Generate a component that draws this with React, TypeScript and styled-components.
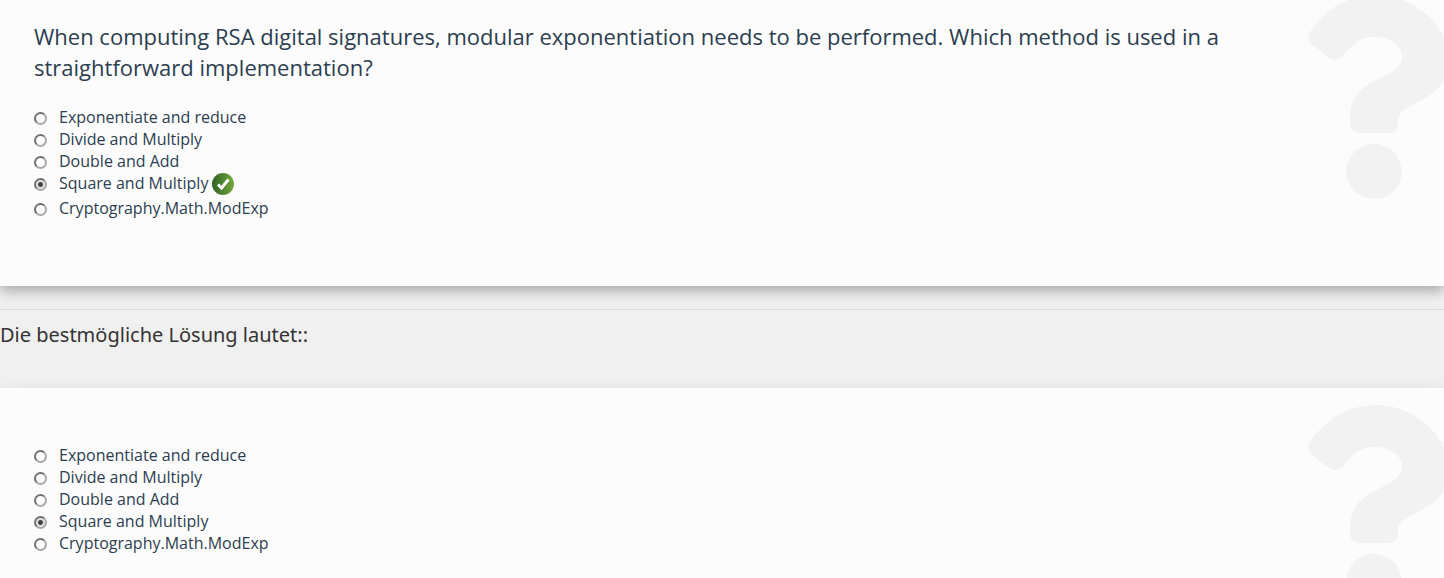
import React from "react";
import styled, { createGlobalStyle } from "styled-components";

const GlobalStyle = createGlobalStyle`
  body {
    margin: 0;
    background: #f0f0f0;
    color: #2c3e50;
    font-family: "Open Sans", "Noto Sans", sans-serif;
    font-size: 16px;
  }
`;

const Page = styled.main`
  min-height: 100vh;
  overflow: hidden;
`;

const Card = styled.section<{ $first?: boolean }>`
  position: relative;
  overflow: hidden;
  background: #fcfcfc;
  padding: ${(p) => (p.$first ? "21px 200px 67px 34px" : "56px 200px 24px 34px")};
`;

const CardShadow = styled.div`
  box-shadow: 0 5px 11px rgba(0, 0, 0, 0.18), 0 4px 15px rgba(0, 0, 0, 0.15);

  & ~ & {
    box-shadow: 0 6px 20px rgba(0, 0, 0, 0.1);
  }
`;

const Mark = styled.svg<{ $top: number }>`
  position: absolute;
  top: ${(p) => p.$top}px;
  right: -6px;
  width: 142px;
  height: 203px;
  fill: #f2f2f2;
`;

const Question = styled.h1`
  margin: 0 0 23px;
  font-size: 22px;
  line-height: 31px;
  font-weight: 400;
`;

const Options = styled.fieldset`
  margin: 0;
  padding: 0;
  border: 0;
  min-width: 0;
`;

const Option = styled.label`
  display: flex;
  align-items: flex-start;
  width: fit-content;
  line-height: 22px;
`;

const Radio = styled.input`
  appearance: none;
  box-sizing: border-box;
  flex: none;
  width: 13px;
  height: 13px;
  margin: 6px 12px 0 0;
  border: 2px solid;
  border-color: #707070 #a8a8a8 #a8a8a8 #707070;
  border-radius: 50%;
  background: #fdfdfd;

  &:checked {
    background: radial-gradient(circle, #444 0 2px, #e4e4e4 3px);
  }
`;

const Correct = styled.svg`
  width: 22px;
  height: 22px;
  margin: 1px 0 2px 4px;
`;

const Divider = styled.hr`
  margin: 23px 0 0;
  border: 0;
  border-top: 1px solid #dcdcdc;
`;

const Solution = styled.h2`
  margin: 0;
  padding: 10px 0 38px;
  color: #333;
  font-family: "Noto Sans", "Open Sans", sans-serif;
  font-size: 20px;
  line-height: 30px;
  font-weight: 400;
`;

const answers = [
  "Exponentiate and reduce",
  "Divide and Multiply",
  "Double and Add",
  "Square and Multiply",
  "Cryptography.Math.ModExp",
];

const QuestionMark = ({ top }: { top: number }) => (
  <Mark $top={top} viewBox="0 0 142 203" aria-hidden="true">
    <path d="M69 0C42 0 20 11 2 37Q-2 44 3 49L21 63Q28 68 34 62C44 49 52 42 66 42C81 42 94 50 94 61C94 87 42 79 42 123V129Q43 137 51 138H82Q90 136 90 129V125C90 106 141 108 141 65C141 29 104 0 69 0Z" />
    <circle cx="66" cy="176.5" r="27.7" />
  </Mark>
);

const AnswerList = ({ name, marked }: { name: string; marked?: boolean }) => (
  <Options aria-label="Answers">
    {answers.map((answer, i) => (
      <Option key={answer}>
        <Radio type="radio" name={name} defaultChecked={i === 3} />
        {answer}
        {marked && i === 3 && (
          <Correct viewBox="0 0 22 22" role="img" aria-label="Correct">
            <defs>
              <linearGradient id="green">
                <stop offset="0" stopColor="#2f6426" />
                <stop offset="1" stopColor="#74a83c" />
              </linearGradient>
            </defs>
            <circle cx="11" cy="11" r="11" fill="url(#green)" />
            <path d="M6 11.5L9.5 15L16.5 6.5" fill="none" stroke="#fff" strokeWidth="3" />
          </Correct>
        )}
      </Option>
    ))}
  </Options>
);

export default function App() {
  return (
    <Page>
      <GlobalStyle />
      <CardShadow>
        <Card $first>
          <QuestionMark top={-5} />
          <Question>
            When computing RSA digital signatures, modular exponentiation needs to be performed. Which
            method is used in a straightforward implementation?
          </Question>
          <AnswerList name="given" marked />
        </Card>
      </CardShadow>
      <Divider />
      <Solution>Die bestmögliche Lösung lautet::</Solution>
      <CardShadow>
        <Card>
          <QuestionMark top={17} />
          <AnswerList name="solution" />
        </Card>
      </CardShadow>
    </Page>
  );
}
